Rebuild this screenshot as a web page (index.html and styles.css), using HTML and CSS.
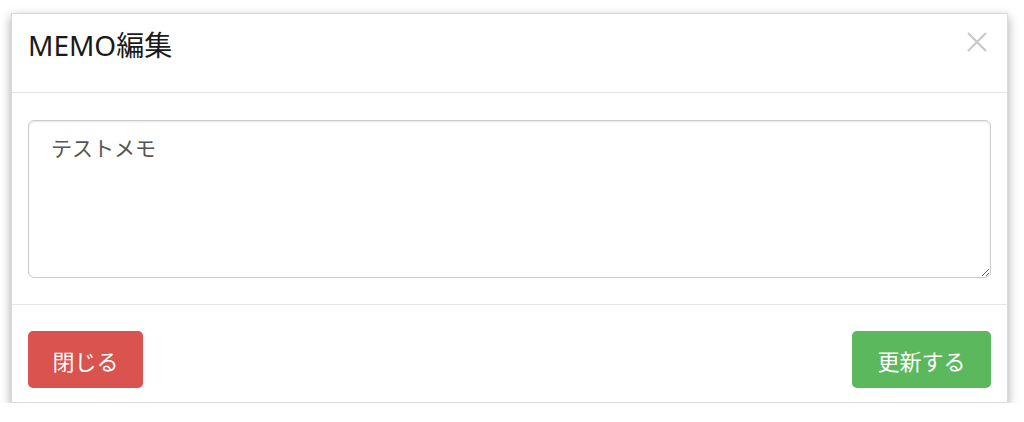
FILE: index.html
```html
<!DOCTYPE html>
<html lang="ja">
<head>
    <meta charset="UTF-8">
    <title>MEMO編集</title>
    <meta name="viewport" content="width=device-width">
    <link rel="stylesheet" href="styles.css">
</head>
<body>
    <div class="modal">
        <div class="modal-header">
            <h4 class="modal-title">MEMO編集</h4>
            <button type="button" class="close" aria-label="Close">
                <svg width="22" height="22" viewBox="0 0 22 22">
                    <path d="M2 2 L20 20 M20 2 L2 20" stroke="#c9c9c9" stroke-width="2.2" fill="none"/>
                </svg>
            </button>
        </div>
        <div class="modal-body">
            <textarea class="memo" rows="5">テストメモ</textarea>
        </div>
        <div class="modal-footer">
            <button type="button" class="btn btn-danger">閉じる</button>
            <button type="button" class="btn btn-success">更新する</button>
        </div>
    </div>
</body>
</html>
```

FILE: styles.css
```css
body {
    margin: 0;
    background: #fff;
    color: #333;
    font-family: "Noto Sans", "Noto Sans CJK JP", sans-serif;
}
.modal {
    margin: 13px 0 0 11px;
    width: 997px;
    background: #fff;
    border: 1px solid rgba(0, 0, 0, .15);
    box-shadow: 0 4px 10px rgba(0, 0, 0, .35);
    box-sizing: border-box;
}
.modal-header {
    display: flex;
    justify-content: space-between;
    align-items: flex-start;
    height: 64px;
    padding: 14px 16px 0 16px;
    border-bottom: 1px solid #e5e5e5;
}
.modal-title {
    margin: 0;
    font-size: 28px;
    line-height: 34px;
    font-weight: normal;
    color: #1a1a1a;
}
.close {
    margin: 3px 3px 0 0;
    padding: 0;
    border: 0;
    background: none;
    line-height: 0;
}
.modal-body {
    padding: 27px 16px 26px;
}
.memo {
    display: block;
    width: 100%;
    height: 158px;
    padding: 12px 22px;
    box-sizing: border-box;
    border: 1px solid #ccc;
    border-radius: 6px;
    box-shadow: inset 0 1px 2px rgba(0, 0, 0, .1);
    font-family: "Noto Sans", "Noto Sans CJK JP", sans-serif;
    font-size: 21px;
    line-height: 1.5;
    color: #555;
    outline: 0;
}
.modal-footer {
    display: flex;
    justify-content: space-between;
    padding: 26px 16px 14px;
    border-top: 1px solid #e5e5e5;
}
.btn {
    height: 57px;
    padding: 0 23px;
    border: 0;
    border-radius: 5px;
    color: #fff;
    font-family: "Noto Sans", "Noto Sans CJK JP", sans-serif;
    font-size: 22px;
}
.btn-danger {
    background: #d9534f;
    width: 115px;
}
.btn-success {
    background: #5cb85c;
    width: 139px;
}
```
